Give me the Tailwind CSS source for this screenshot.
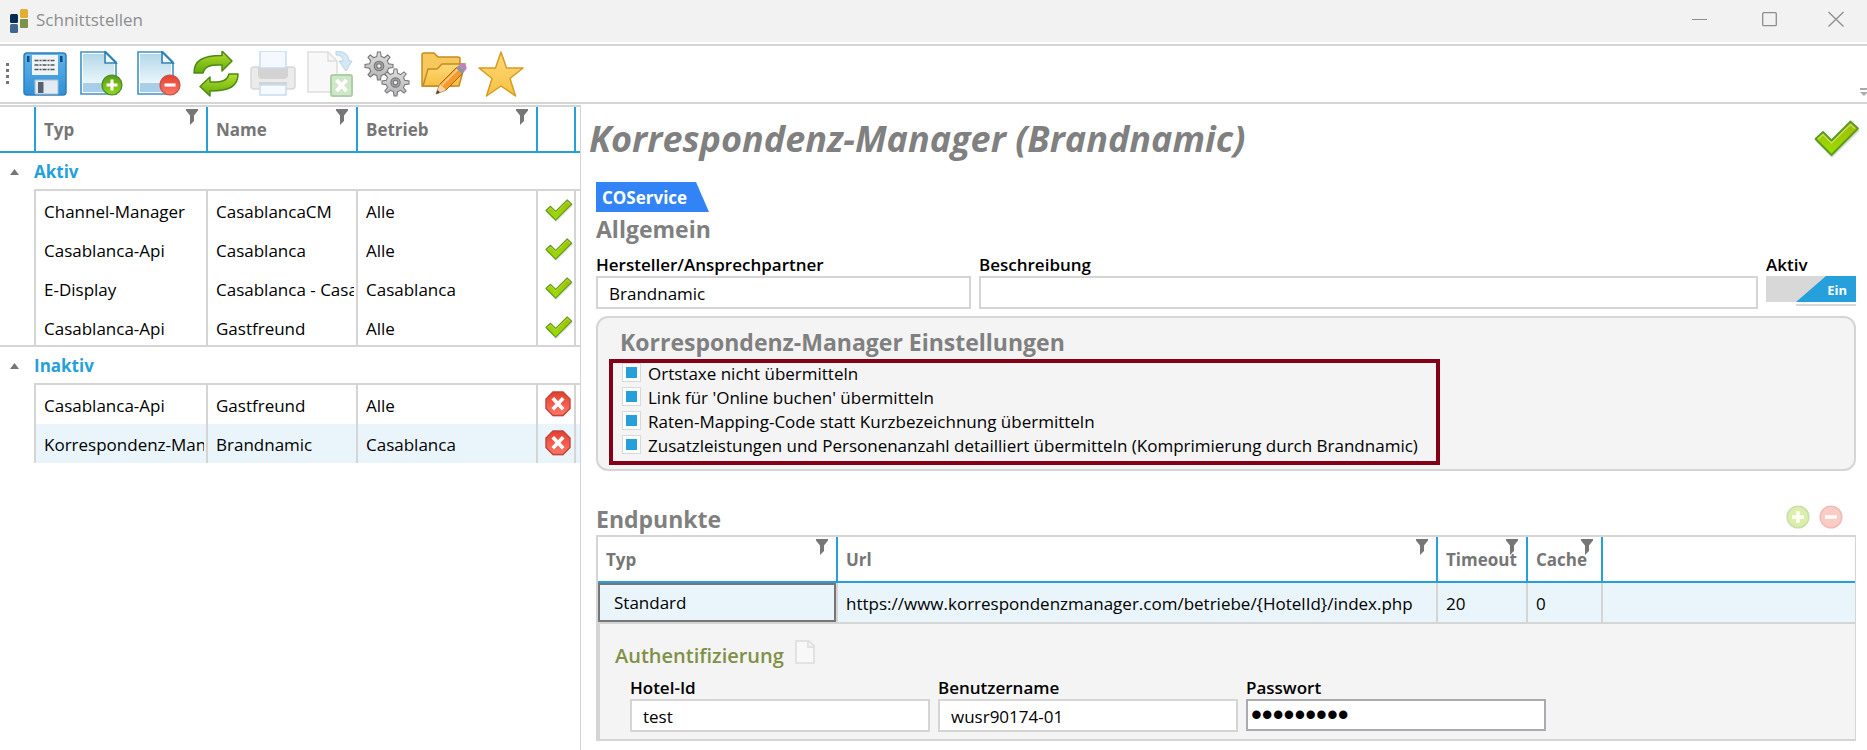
<!DOCTYPE html>
<html lang="de">
<head>
  <meta charset="UTF-8">
  <meta name="viewport" content="width=device-width, initial-scale=1.0">
  <title>Schnittstellen</title>
  <script src="https://cdn.jsdelivr.net/npm/@tailwindcss/browser@4"></script>
</head>
<body class="flex min-h-screen flex-col bg-white font-['Open_Sans','Noto_Sans',sans-serif] text-[17px] leading-6 text-black">

  <!-- Shared icons -->
  <svg class="absolute size-0" aria-hidden="true">
    <defs>
      <linearGradient id="g-green" x1="0" y1="0" x2="0" y2="1"><stop offset="0" stop-color="#a5b800"/><stop offset="1" stop-color="#98e000"/></linearGradient>
      <linearGradient id="g-plus" x1="0" y1="0" x2="0" y2="1"><stop offset="0" stop-color="#5a9c14"/><stop offset="1" stop-color="#93d81c"/></linearGradient>
      <linearGradient id="g-arrow" x1="0" y1="0" x2="0" y2="1"><stop offset="0" stop-color="#b4e02c"/><stop offset="1" stop-color="#62a80c"/></linearGradient>
      <linearGradient id="g-red" x1="0" y1="0" x2="0" y2="1"><stop offset="0" stop-color="#e2402e"/><stop offset="1" stop-color="#ff7867"/></linearGradient>
      <linearGradient id="g-blue" x1="0" y1="0" x2="0" y2="1"><stop offset="0" stop-color="#63b4e8"/><stop offset="1" stop-color="#2f8fd6"/></linearGradient>
      <linearGradient id="g-page" x1="0" y1="0" x2="0" y2="1"><stop offset="0" stop-color="#b4d8e8"/><stop offset="1" stop-color="#eaf6fc"/></linearGradient>
      <linearGradient id="g-gold" x1="0" y1="0" x2="0" y2="1"><stop offset="0" stop-color="#ffd978"/><stop offset="1" stop-color="#f6c143"/></linearGradient>
      <linearGradient id="g-metal" x1="0" y1="0" x2="0" y2="1"><stop offset="0" stop-color="#dedede"/><stop offset="1" stop-color="#b4b4b6"/></linearGradient>
    </defs>
    <symbol id="check" viewBox="0 0 46 38">
      <path d="M3 21 18 36.500 45 10" fill="none" stroke="#000" stroke-opacity=".15" stroke-width="2"/>
      <path d="M1.500 19 9 12l8.500 8.500L36.500 1.500 44 8.500 17.500 35z" fill="url(#g-green)" stroke="#5a9a1c" stroke-width="1.800" stroke-linejoin="round"/>
      <path d="M4 19 9 14.500l8.500 8.500L36.500 4.500 41 8.500" fill="none" stroke="#fff" stroke-opacity=".4" stroke-width="1.300"/>
    </symbol>
    <symbol id="stop" viewBox="0 0 26 27">
      <path d="M8 2.500h10l7 7v9l-7 7H8l-7-7v-9z" fill="#000" fill-opacity=".18"/>
      <path d="M8 1h10l7 7v9.500l-7 7H8l-7-7V8z" fill="url(#g-red)" stroke="#c4423a" stroke-width="1.400"/>
      <path d="m9 8.500 8 8.500m0-8.500L9 17" stroke="#fff" stroke-width="3.600" stroke-linecap="square"/>
    </symbol>
    <symbol id="funnel" viewBox="0 0 12 16"><path d="M0 0h12v1.500L8 6.500V12l-4 4V6.500L0 1.500z" fill="#767676"/></symbol>
    <symbol id="plus" viewBox="0 0 24 24">
      <circle cx="12" cy="12" r="10.800" fill="url(#g-plus)" stroke="#4f8f2a" stroke-width="1.500"/>
      <path d="M12 6v12M6 12h12" stroke="#fff" stroke-width="3.400"/>
    </symbol>
    <symbol id="plus-light" viewBox="0 0 24 24">
      <circle cx="12" cy="12" r="10.800" fill="#dcefa9" stroke="#c6dfac" stroke-width="1.500"/>
      <path d="M12 6v12M6 12h12" stroke="#fff" stroke-width="3.400"/>
    </symbol>
    <symbol id="minus" viewBox="0 0 24 24">
      <circle cx="12" cy="12" r="10.800" fill="url(#g-red)" stroke="#c9534b" stroke-width="1.500"/>
      <path d="M6 12h12" stroke="#fff" stroke-width="3.400"/>
    </symbol>
    <symbol id="minus-light" viewBox="0 0 24 24">
      <circle cx="12" cy="12" r="10.800" fill="#fbccc6" stroke="#efbdb8" stroke-width="1.500"/>
      <path d="M6 12h12" stroke="#fff" stroke-width="3.400"/>
    </symbol>
    <symbol id="page" viewBox="0 0 46 46">
      <path d="M2 1h25l10 10v32H2z" fill="#fff" stroke="#3f93c4" stroke-width="1.600"/>
      <path d="M4 3h21v10h10v19H4z" fill="url(#g-page)"/>
      <path d="M4 32h31v9H4z" fill="#a9cfe8"/>
      <path d="M26 1v11h11z" fill="#f4fbff" stroke="#2a7db5" stroke-width="1.600"/>
    </symbol>
    <symbol id="gear" viewBox="-15 -15 30 30">
      <g stroke="#77777a" stroke-width="1.100">
        <path d="M-2.200-9.500-1.500-14h3l.7 4.500A9.500 9.500 0 0 1 5.200-8.200L8.800-11 11-8.800 8.200-5.200A9.500 9.500 0 0 1 9.500-2.200l4.500.7v3l-4.500.7A9.500 9.500 0 0 1 8.200 5.200L11 8.800 8.800 11 5.200 8.200A9.500 9.500 0 0 1 2.200 9.500L1.500 14h-3l-.7-4.500A9.500 9.500 0 0 1-5.200 8.200L-8.800 11-11 8.800-8.200 5.200A9.500 9.500 0 0 1-9.500 2.200L-14 1.500v-3l4.500-.7A9.500 9.500 0 0 1-8.200-5.200L-11-8.800-8.800-11-5.200-8.200A9.500 9.500 0 0 1-2.200-9.500z" fill="url(#g-metal)"/>
        <circle r="4.800" fill="#a2a2a4"/>
        <circle r="2.200" fill="#f2f2f2"/>
      </g>
    </symbol>
  </svg>

  <header class="flex h-[42px] items-center bg-[#f2f2f2] pl-2 text-[#8e8e8e]">
    <svg class="mr-1.5 h-7 w-[22px]" viewBox="0 0 22 28">
      <rect x="2" y="7" width="8" height="9" rx="1.500" fill="#062c50"/>
      <rect x="2" y="17" width="8" height="9" rx="1.500" fill="#41688c"/>
      <rect x="12" y="2" width="8" height="9" rx="1.500" fill="#e3ad2f"/>
      <rect x="12" y="12" width="8" height="9" rx="1" fill="#7d9148"/>
    </svg>
    <h1 class="grow pb-0.5">Schnittstellen</h1>
    <button type="button" aria-label="Minimieren" class="flex w-[70px] justify-center pb-1"><svg class="size-4" viewBox="0 0 16 16"><path d="M0 8.500h15" stroke="#8e8e8e"/></svg></button>
    <button type="button" aria-label="Maximieren" class="flex w-[70px] justify-center pb-1"><svg class="size-4" viewBox="0 0 16 16"><rect x=".7" y="1.700" width="13.600" height="13" rx="1" fill="none" stroke="#8e8e8e" stroke-width="1.300"/></svg></button>
    <button type="button" aria-label="Schließen" class="flex w-[62px] justify-center pb-1"><svg class="size-4" viewBox="0 0 16 16"><path d="m.5 1 15 14.500m0-14.500L.5 15.500" stroke="#8e8e8e" stroke-width="1.300"/></svg></button>
  </header>

  <!-- Toolbar -->
  <div class="mt-0.5 flex h-15 items-center border-y-2 border-[#d5d5d5]">
    <svg class="mr-[13px] ml-[6px] h-6 w-[3px]" viewBox="0 0 3 24"><path d="M1.500 1v24" stroke="#767676" stroke-width="3" stroke-dasharray="3 3"/></svg>
    <div class="flex grow gap-[11px]">
      <button type="button" aria-label="Speichern">
        <svg class="size-[46px]" viewBox="0 0 46 46">
          <rect x="2" y="2" width="42" height="42" rx="3" fill="url(#g-blue)" stroke="#2f7fbd" stroke-width="1.500"/>
          <path d="M5 5h2.500v6H5zM38 5h2.500v6H38z" fill="#0d4d85"/>
          <path d="M10 4h26v20H10z" fill="#eef4f8"/>
          <path d="M12.500 9.500h21M12.500 14h21M12.500 18.500h21" stroke="#555" stroke-width="1.500" stroke-dasharray="4 1 2 1"/>
          <path d="M13 29h23v14H13z" fill="#e4ebf2" stroke="#a9bfd2"/>
          <path d="M16 31h5.500v11H16z" fill="#59616c"/>
        </svg>
      </button>
      <button type="button" aria-label="Neu">
        <svg class="size-[46px]" viewBox="0 0 46 46"><use href="#page"/><use href="#plus" x="22" y="23" width="22" height="22"/></svg>
      </button>
      <button type="button" aria-label="Löschen">
        <svg class="size-[46px]" viewBox="0 0 46 46"><use href="#page"/><use href="#minus" x="23" y="23" width="22" height="22"/></svg>
      </button>
      <button type="button" aria-label="Aktualisieren">
        <svg class="size-[46px]" viewBox="0 0 46 46">
          <g fill="url(#g-arrow)" stroke="#4c8a14" stroke-width="1.500" stroke-linejoin="round">
            <path d="M1 22C1 10 9 4.500 29 4.500V0l10 10-10 10v-6C17 13.500 12 15 10 22z"/>
            <path d="M45 23c0 12-8 17-28 17v5L7 35.500l10-9.500v5c12 .5 17-1 19-8z"/>
          </g>
        </svg>
      </button>
      <button type="button" aria-label="Drucken" disabled>
        <svg class="size-[46px]" viewBox="0 0 46 46">
          <rect x="1" y="16" width="44" height="22" rx="3" fill="#ebebeb" stroke="#d8d8d8" stroke-width="1.500"/>
          <path d="M8 16h30v9q-1 3-4 3H12q-3 0-4-3z" fill="#d3d3d3"/>
          <path d="M10 0h26v17H10z" fill="#f3f9ff" stroke="#c8ddf0" stroke-width="1.500"/>
          <path d="M9 31h28v3H9z" fill="#d3d3d3"/>
          <path d="M10 34h26v10H10z" fill="#f6fbff" stroke="#c8ddf0" stroke-width="1.500"/>
        </svg>
      </button>
      <button type="button" aria-label="Excel-Export" disabled>
        <svg class="size-[46px]" viewBox="0 0 46 46">
          <path d="M1 1h20l9 9v31H1z" fill="#f8f8f8" stroke="#dedede" stroke-width="1.500"/>
          <path d="M21 1v9h9" fill="none" stroke="#dedede" stroke-width="1.500"/>
          <path d="M29 0c8 0 13 4 13 10h3l-6 10-7-10h4c0-4-3-6-7-6z" fill="#d4e8f6" stroke="#b4d4ea"/>
          <rect x="24" y="24" width="21" height="21" rx="2" fill="#cfe6c8" stroke="#acd0a4" stroke-width="2"/>
          <path d="m29.500 29 10 11m0-11-10 11" stroke="#fff" stroke-width="4"/>
        </svg>
      </button>
      <button type="button" aria-label="Einstellungen">
        <svg class="size-[46px]" viewBox="0 0 46 46"><use href="#gear" x="0" y="0" width="30" height="30"/><use href="#gear" x="17" y="17" width="29" height="29"/></svg>
      </button>
      <button type="button" aria-label="Ordner bearbeiten">
        <svg class="size-[46px]" viewBox="0 0 46 46">
          <path d="M1 4q0-2 2-2h10l4 4h20q2 0 2 2v8l-6 19H1z" fill="#f7c95c" stroke="#c58a20" stroke-width="1.500"/>
          <path d="M2 35 7 18h9l5-5h23l-6 22z" fill="url(#g-gold)" stroke="#c58a20" stroke-width="1.500"/>
          <path d="m15 43 4-10 17-17 6 6-17 17z" fill="#f59a2c" stroke="#a96413"/>
          <path d="m21 34 17-17" stroke="#ffc87a" stroke-width="2"/>
          <path d="m15 43 4-10 6 6z" fill="#f2d6a8"/><path d="m15 43 1.500-4 2.500 2.500z" fill="#444"/>
          <path d="m35 17 3-3 6 6-3 3z" fill="#8797a8"/>
          <path d="m38 14 2-1.500c3-1 6 2 5.500 5L44 20z" fill="#c57cc0"/>
        </svg>
      </button>
      <button type="button" aria-label="Favoriten">
        <svg class="size-[46px]" viewBox="0 0 46 46"><path d="m23 1 5.500 16H45L32 27.500 37.500 45 23 35 8.500 45 14 27.500 1 17h16.500z" fill="url(#g-gold)" stroke="#d79a22" stroke-width="1.500" stroke-linejoin="round"/></svg>
      </button>
    </div>
    <svg class="mt-9 h-2 w-[7px]" viewBox="0 0 7 8"><path d="M0 1h7" stroke="#aaa" stroke-width="2"/><path d="M0 4h8L4 8z" fill="#aaa"/></svg>
  </div>

  <div class="flex grow">
    <aside class="mt-px w-[581px] shrink-0 border-t-2 border-r border-[#d5d5d5]">
      <table class="w-full table-fixed border-separate border-spacing-0 text-left whitespace-nowrap">
        <colgroup><col class="w-[34px]"><col class="w-[172px]"><col class="w-[150px]"><col class="w-[180px]"><col class="w-[38px]"><col></colgroup>
        <thead class="text-[#767676]">
          <tr class="h-[46px]">
            <th class="border-b-2 border-[#26a0da]"></th>
            <th class="relative border-b-2 border-l-2 border-[#26a0da] pt-0.5 pl-2">Typ<svg class="absolute top-0.5 right-2 h-4 w-3"><use href="#funnel"/></svg></th>
            <th class="relative border-b-2 border-l-2 border-[#26a0da] pt-0.5 pl-2">Name<svg class="absolute top-0.5 right-2 h-4 w-3"><use href="#funnel"/></svg></th>
            <th class="relative border-b-2 border-l-2 border-[#26a0da] pt-0.5 pl-2">Betrieb<svg class="absolute top-0.5 right-2 h-4 w-3"><use href="#funnel"/></svg></th>
            <th class="border-b-2 border-l-2 border-[#26a0da]"></th>
            <th class="border-b-2 border-l-2 border-[#26a0da]"></th>
          </tr>
        </thead>
        <tbody>
          <tr class="h-[38px]">
            <td><button type="button" aria-label="Aktiv einklappen" class="block pl-2.5"><svg class="h-[6px] w-[9px]" viewBox="0 0 9 6"><path d="M0 6h9L4.500 0z" fill="#767676"/></svg></button></td>
            <th colspan="5" class="border-b-2 border-[#d5d5d5] pt-0.5 text-[#26a0da]">Aktiv</th>
          </tr>
          <tr class="h-[39px]">
            <td></td>
            <td class="border-l-2 border-[#d5d5d5] pt-0.5 pl-2">Channel-Manager</td>
            <td class="border-l-2 border-[#d5d5d5] pt-0.5 pl-2">CasablancaCM</td>
            <td class="border-l-2 border-[#d5d5d5] pt-0.5 pl-2">Alle</td>
            <td class="border-l-2 border-[#d5d5d5] pl-[7px]"><svg class="h-[23px] w-7"><use href="#check"/></svg></td>
            <td class="border-l-2 border-[#d5d5d5]"></td>
          </tr>
          <tr class="h-[39px]">
            <td></td>
            <td class="border-l-2 border-[#d5d5d5] pt-0.5 pl-2">Casablanca-Api</td>
            <td class="border-l-2 border-[#d5d5d5] pt-0.5 pl-2">Casablanca</td>
            <td class="border-l-2 border-[#d5d5d5] pt-0.5 pl-2">Alle</td>
            <td class="border-l-2 border-[#d5d5d5] pl-[7px]"><svg class="h-[23px] w-7"><use href="#check"/></svg></td>
            <td class="border-l-2 border-[#d5d5d5]"></td>
          </tr>
          <tr class="h-[39px]">
            <td></td>
            <td class="border-l-2 border-[#d5d5d5] pt-0.5 pl-2">E-Display</td>
            <td class="border-l-2 border-[#d5d5d5] pt-0.5 pr-0.5 pl-2"><div class="overflow-hidden">Casablanca - Casablanca</div></td>
            <td class="border-l-2 border-[#d5d5d5] pt-0.5 pl-2">Casablanca</td>
            <td class="border-l-2 border-[#d5d5d5] pl-[7px]"><svg class="h-[23px] w-7"><use href="#check"/></svg></td>
            <td class="border-l-2 border-[#d5d5d5]"></td>
          </tr>
          <tr class="h-[39px]">
            <td class="border-b-2 border-[#d5d5d5]"></td>
            <td class="border-b-2 border-l-2 border-[#d5d5d5] pt-1 pl-2">Casablanca-Api</td>
            <td class="border-b-2 border-l-2 border-[#d5d5d5] pt-1 pl-2">Gastfreund</td>
            <td class="border-b-2 border-l-2 border-[#d5d5d5] pt-1 pl-2">Alle</td>
            <td class="border-b-2 border-l-2 border-[#d5d5d5] pt-0.5 pl-[7px]"><svg class="h-[23px] w-7"><use href="#check"/></svg></td>
            <td class="border-b-2 border-l-2 border-[#d5d5d5]"></td>
          </tr>
        </tbody>
        <tbody>
          <tr class="h-[38px]">
            <td><button type="button" aria-label="Inaktiv einklappen" class="block pl-2.5"><svg class="h-[6px] w-[9px]" viewBox="0 0 9 6"><path d="M0 6h9L4.500 0z" fill="#767676"/></svg></button></td>
            <th colspan="5" class="border-b-2 border-[#d5d5d5] pt-0.5 text-[#26a0da]">Inaktiv</th>
          </tr>
          <tr class="h-[39px]">
            <td></td>
            <td class="border-l-2 border-[#d5d5d5] pt-0.5 pl-2">Casablanca-Api</td>
            <td class="border-l-2 border-[#d5d5d5] pt-0.5 pl-2">Gastfreund</td>
            <td class="border-l-2 border-[#d5d5d5] pt-0.5 pl-2">Alle</td>
            <td class="border-l-2 border-[#d5d5d5] pl-[7px]"><svg class="h-[27px] w-[26px]"><use href="#stop"/></svg></td>
            <td class="border-l-2 border-[#d5d5d5]"></td>
          </tr>
          <tr class="h-[39px] bg-[#e9f5fb]">
            <td class="bg-white"></td>
            <td class="border-l-2 border-[#d5d5d5] pt-0.5 pr-0.5 pl-2"><div class="overflow-hidden">Korrespondenz-Manager</div></td>
            <td class="border-l-2 border-[#d5d5d5] pt-0.5 pl-2">Brandnamic</td>
            <td class="border-l-2 border-[#d5d5d5] pt-0.5 pl-2">Casablanca</td>
            <td class="border-l-2 border-[#d5d5d5] pl-[7px]"><svg class="h-[27px] w-[26px]"><use href="#stop"/></svg></td>
            <td class="border-l-2 border-[#d5d5d5]"></td>
          </tr>
        </tbody>
      </table>
    </aside>

    <main class="min-w-0 grow pr-[11px] pl-[15px]">
      <div class="-mr-1 -ml-[7px] flex h-[78px] items-center justify-between pb-2">
        <h2 class="text-[36px] leading-[48px] font-bold text-[#808080] italic">Korrespondenz-Manager (Brandnamic)</h2>
        <svg class="h-[38px] w-[46px]"><use href="#check"/></svg>
      </div>

      <div class="h-[30px] w-[113px] bg-[#3284f6] pl-[6px] text-[17px] leading-[31px] font-bold text-white [clip-path:polygon(0_0,100px_0,100%_100%,0_100%)]">COService</div>
      <h3 class="h-10 text-[23px] leading-[34px] font-bold text-[#808080]">Allgemein</h3>

      <div class="flex gap-2">
        <div class="w-[375px]">
          <label for="hersteller" class="block h-6 leading-[26px] font-semibold">Hersteller/Ansprechpartner</label>
          <input id="hersteller" type="text" value="Brandnamic" class="h-[33px] w-full border-2 border-[#d5d5d5] bg-white px-[11px] pt-0.5">
        </div>
        <div class="grow">
          <label for="beschreibung" class="block h-6 leading-[26px] font-semibold">Beschreibung</label>
          <input id="beschreibung" type="text" class="h-[33px] w-full border-2 border-[#d5d5d5] bg-white px-[11px] pt-0.5">
        </div>
        <div class="w-[90px]">
          <label for="aktiv" class="block h-6 leading-[26px] font-semibold">Aktiv</label>
          <div class="relative">
            <svg class="block h-[30px] w-[90px]" viewBox="0 0 90 30">
              <path d="M0 0h90v26H0z" fill="#d8d8d8"/><path d="M60 0h30v26H30z" fill="#26a0da"/><path d="M30 28h60v2H30z" fill="#d8d8d8"/>
            </svg>
            <span class="absolute top-1 right-[9px] text-[13px] leading-5 font-bold text-white">Ein</span>
            <input id="aktiv" type="checkbox" checked class="absolute inset-0 size-full opacity-0">
          </div>
        </div>
      </div>

      <section class="mt-[7px] rounded-xl border-2 border-[#d5d5d5] bg-[#f4f4f4] pt-[9px] pb-1 pl-[11px]">
        <h3 class="h-8 pl-[11px] text-[23px] leading-[30px] font-bold text-[#808080]">Korrespondenz-Manager Einstellungen</h3>
        <div class="w-[831px] border-4 border-[#830016] pb-0.5 pl-[9px] leading-[22px]">
          <label class="flex h-6 gap-[7px]"><input type="checkbox" checked class="size-[19px] appearance-none border border-[#d9d9d9] bg-white bg-[length:11px_11px] bg-center bg-no-repeat checked:bg-[image:linear-gradient(#26a0da,#26a0da)]">Ortstaxe nicht übermitteln</label>
          <label class="flex h-6 gap-[7px]"><input type="checkbox" checked class="size-[19px] appearance-none border border-[#d9d9d9] bg-white bg-[length:11px_11px] bg-center bg-no-repeat checked:bg-[image:linear-gradient(#26a0da,#26a0da)]">Link für 'Online buchen' übermitteln</label>
          <label class="flex h-6 gap-[7px]"><input type="checkbox" checked class="size-[19px] appearance-none border border-[#d9d9d9] bg-white bg-[length:11px_11px] bg-center bg-no-repeat checked:bg-[image:linear-gradient(#26a0da,#26a0da)]">Raten-Mapping-Code statt Kurzbezeichnung übermitteln</label>
          <label class="flex h-6 gap-[7px]"><input type="checkbox" checked class="size-[19px] appearance-none border border-[#d9d9d9] bg-white bg-[length:11px_11px] bg-center bg-no-repeat checked:bg-[image:linear-gradient(#26a0da,#26a0da)]">Zusatzleistungen und Personenanzahl detailliert übermitteln (Komprimierung durch Brandnamic)</label>
        </div>
      </section>

      <div class="mt-[34px] flex h-[30px] gap-[9px] pr-[13px]">
        <h3 class="grow text-[23px] leading-7 font-bold text-[#808080]">Endpunkte</h3>
        <button type="button" aria-label="Endpunkt hinzufügen" disabled class="size-6"><svg class="size-6"><use href="#plus-light"/></svg></button>
        <button type="button" aria-label="Endpunkt entfernen" disabled class="size-6"><svg class="size-6"><use href="#minus-light"/></svg></button>
      </div>

      <div class="border-2 border-r border-[#d5d5d5]">
        <table class="w-full table-fixed border-separate border-spacing-0 text-left whitespace-nowrap">
          <colgroup><col class="w-[238px]"><col class="w-[600px]"><col class="w-[90px]"><col class="w-[75px]"><col></colgroup>
          <thead class="text-[#767676]">
            <tr class="h-[46px]">
              <th class="relative border-b-2 border-[#26a0da] pt-0.5 pl-2">Typ<svg class="absolute top-0.5 right-2 h-4 w-3"><use href="#funnel"/></svg></th>
              <th class="relative border-b-2 border-l-2 border-[#26a0da] pt-0.5 pl-2">Url<svg class="absolute top-0.5 right-2 h-4 w-3"><use href="#funnel"/></svg></th>
              <th class="relative border-b-2 border-l-2 border-[#26a0da] pt-0.5 pl-2">Timeout<svg class="absolute top-0.5 right-2 h-4 w-3"><use href="#funnel"/></svg></th>
              <th class="relative border-b-2 border-l-2 border-[#26a0da] pt-0.5 pl-2">Cache<svg class="absolute top-0.5 right-2 h-4 w-3"><use href="#funnel"/></svg></th>
              <th class="border-b-2 border-l-2 border-[#26a0da]"></th>
            </tr>
          </thead>
          <tbody>
            <tr class="h-[39px] bg-[#e9f5fb]">
              <td class="border-2 border-[#767676] pl-[14px]">Standard</td>
              <td class="border-l-2 border-[#d5d5d5] pt-0.5 pl-2">https://www.korrespondenzmanager.com/betriebe/{HotelId}/index.php</td>
              <td class="border-l-2 border-[#d5d5d5] pt-0.5 pl-2">20</td>
              <td class="border-l-2 border-[#d5d5d5] pt-0.5 pl-2">0</td>
              <td class="border-l-2 border-[#d5d5d5]"></td>
            </tr>
          </tbody>
        </table>
        <div class="border-t-2 border-l-2 border-[#d5d5d5] bg-[#f4f4f4] pt-4 pb-[7px] pl-[15px]">
          <div class="flex items-start gap-[11px]">
            <h4 class="text-[20px] leading-8 font-semibold text-[#7f9146]">Authentifizierung</h4>
            <svg class="h-6 w-5" viewBox="0 0 20 24"><path d="M1 1h13l5 5v17H1z" fill="#f8f8f8" stroke="#e2e2e2" stroke-width="2"/><path d="M13 2v5h5" fill="none" stroke="#e2e2e2" stroke-width="2"/></svg>
          </div>
          <div class="mt-[3px] flex gap-2 pl-[15px]">
            <div class="w-[300px]">
              <label for="hotel" class="block h-6 leading-[26px] font-semibold">Hotel-Id</label>
              <input id="hotel" type="text" value="test" class="h-[33px] w-full border-2 border-[#d5d5d5] bg-white px-[11px] pt-0.5">
            </div>
            <div class="w-[300px]">
              <label for="benutzer" class="block h-6 leading-[26px] font-semibold">Benutzername</label>
              <input id="benutzer" type="text" value="wusr90174-01" class="h-[33px] w-full border-2 border-[#d5d5d5] bg-white px-[11px] pt-0.5">
            </div>
            <div class="w-[300px]">
              <label for="passwort" class="block h-6 leading-[26px] font-semibold">Passwort</label>
              <input id="passwort" type="password" value="geheim123" class="block h-8 w-full border-2 border-[#aaaab0] bg-white px-[3px] font-['Liberation_Sans',sans-serif] text-[31px]">
            </div>
          </div>
        </div>
      </div>
    </main>
  </div>
</body>
</html>
